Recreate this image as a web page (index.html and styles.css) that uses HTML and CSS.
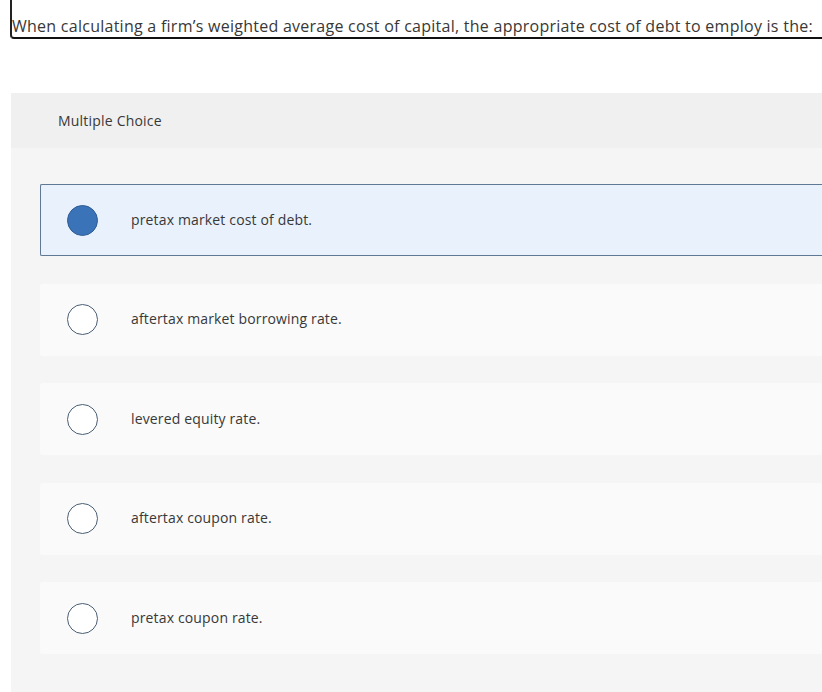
FILE: index.html
```html
<!DOCTYPE html>
<html>
<head>
<meta charset="utf-8">
<link rel="stylesheet" href="styles.css">
</head>
<body>
<div class="question">When calculating a firm’s weighted average cost of capital, the appropriate cost of debt to employ is the:</div>
<div class="panel">
  <div class="panel-header">Multiple Choice</div>
  <div class="options">
    <div class="option selected"><span class="radio"></span><span class="label">pretax market cost of debt.</span></div>
    <div class="option"><span class="radio"></span><span class="label">aftertax market borrowing rate.</span></div>
    <div class="option"><span class="radio"></span><span class="label">levered equity rate.</span></div>
    <div class="option"><span class="radio"></span><span class="label">aftertax coupon rate.</span></div>
    <div class="option"><span class="radio"></span><span class="label">pretax coupon rate.</span></div>
  </div>
</div>
</body>
</html>
```
FILE: styles.css
```css
html, body {
  margin: 0;
  padding: 0;
  overflow: hidden;
  background: #fff;
}
body {
  font-family: "Open Sans", Lato, "Liberation Sans", sans-serif;
  font-variant-ligatures: none;
  color: #383838;
  width: 822px;
  height: 692px;
}
.question {
  margin-left: 10px;
  height: 36px;
  border-left: 2px solid #222;
  border-bottom: 2px solid #111;
  border-bottom-left-radius: 4px;
  font-size: 16px;
  line-height: 20px;
  letter-spacing: 0.26px;
  display: flex;
  align-items: flex-end;
  padding-bottom: 1px;
  box-sizing: content-box;
  white-space: nowrap;
  overflow: hidden;
}
.panel {
  margin-top: 54px;
  margin-left: 11px;
  height: 600px;
  background: #f5f5f5;
}
.panel-header {
  height: 55px;
  line-height: 55px;
  background: #f0f0f0;
  padding-left: 47px;
  font-size: 14px;
  letter-spacing: 0.2px;
}
.options {
  padding: 36px 0 0 29px;
  display: flex;
  flex-direction: column;
  gap: 27.5px;
}
.option {
  height: 72px;
  box-sizing: border-box;
  border: 1px solid transparent;
  border-right: none;
  border-radius: 2px 0 0 2px;
  background: #fafafa;
  display: flex;
  align-items: center;
  padding-left: 26px;
  font-size: 14px;
  letter-spacing: 0.15px;
}
.option.selected {
  background: #e9f2fc;
  border-color: #5f7893;
}
.radio {
  width: 31px;
  height: 31px;
  box-sizing: border-box;
  border-radius: 50%;
  border: 1.5px solid #4a5f75;
  background: #fff;
  flex: none;
}
.selected .radio {
  background: #3b73b9;
  border-color: #2f5d94;
}
.label {
  margin-left: 33px;
  margin-top: -2px;
}
```
